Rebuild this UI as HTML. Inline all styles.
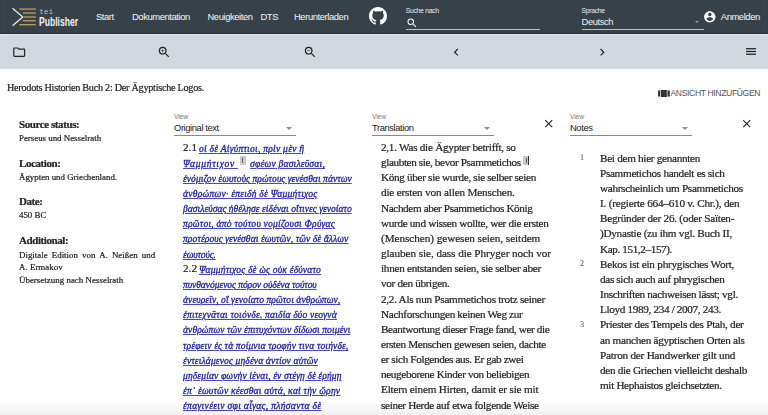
<!DOCTYPE html>
<html><head><meta charset="utf-8">
<style>
html,body{margin:0;padding:0;width:768px;height:415px;overflow:hidden;background:#fff;}
body{position:relative;font-family:"Liberation Sans",sans-serif;}
.abs{position:absolute;white-space:nowrap;}
#hdr{position:absolute;left:0;top:0;width:768px;height:34.4px;background:#36414a;z-index:2;box-shadow:inset 0 -1.5px 1px -0.5px #2a3238;}
#tb{position:absolute;left:0;top:34px;width:768px;height:34.5px;background:#d1d9de;}
.nav{position:absolute;top:11px;font-size:9.4px;line-height:12px;color:#eef0f1;letter-spacing:-0.4px;-webkit-text-stroke:0.05px #eef0f1;}
.lbl{position:absolute;font-size:6.8px;line-height:8px;letter-spacing:-0.3px;}
.serif{font-family:"Liberation Serif",serif;}
.col{position:absolute;font-family:"Liberation Serif",serif;font-size:10.8px;line-height:15.1px;color:#333;white-space:nowrap;}
.gr{color:#2222aa;font-style:italic;-webkit-text-stroke:0.3px #2222aa;text-decoration:underline;text-underline-offset:0.6px;text-decoration-thickness:1px;text-decoration-color:#4a4ab8;}
.side{position:absolute;left:18.5px;font-family:"Liberation Serif",serif;color:#333;white-space:nowrap;}
.side b{font-size:10.2px;}
.sel{position:absolute;top:112px;width:122px;height:23.4px;border-bottom:1px solid #8a8a8a;}
.sel .v{position:absolute;left:0;top:1.2px;font-size:6.8px;line-height:8px;color:#7a7a7a;letter-spacing:-0.15px;}
.sel .t{position:absolute;left:0;top:10px;font-size:9.4px;color:#222;letter-spacing:-0.4px;}
.sel .ar{position:absolute;right:3.8px;top:14.6px;width:0;height:0;border-left:3px solid transparent;border-right:3px solid transparent;border-top:3px solid #8f8f8f;}
.ln{position:absolute;white-space:nowrap;font-family:"Liberation Serif",serif;will-change:transform;}
.tx{color:#252525;-webkit-text-stroke:0.22px #252525;}
</style></head><body>
<div id="hdr">
  <svg class="abs" style="left:10px;top:6px" width="70" height="24" viewBox="0 0 70 24">
    <polyline points="2.5,2.2 12.8,11 2.5,19.8" fill="none" stroke="#e8e8e8" stroke-width="1.3"/>
    <g stroke="#d3a558" stroke-width="1.2">
      <line x1="9.3" y1="3.1" x2="25.8" y2="3.1"/>
      <line x1="13" y1="7" x2="25.8" y2="7"/>
      <line x1="14" y1="11" x2="25.8" y2="11"/>
      <line x1="13" y1="14.8" x2="25.8" y2="14.8"/>
      <line x1="9.3" y1="18.7" x2="25.8" y2="18.7"/>
    </g>
  </svg>
  <div class="abs" style="left:39.5px;top:8px;font-family:'Liberation Mono',monospace;font-size:7px;color:#c4c8ca;letter-spacing:0.4px;">tei</div>
  <div class="abs" style="left:39px;top:14.6px;font-size:12px;line-height:14px;font-weight:bold;color:#f2f2f2;transform:scaleX(0.713);transform-origin:0 0;">Publisher</div>
  <div class="nav" style="left:96px;">Start</div>
  <div class="nav" style="left:132px;">Dokumentation</div>
  <div class="nav" style="left:207.5px;">Neuigkeiten</div>
  <div class="nav" style="left:260.5px;">DTS</div>
  <div class="nav" style="left:294px;">Herunterladen</div>
  <svg class="abs" style="left:369px;top:6.5px" width="18" height="18" viewBox="0 0 16 16"><path fill="#fff" d="M8 0C3.58 0 0 3.58 0 8c0 3.54 2.29 6.53 5.47 7.59.4.07.55-.17.55-.38 0-.19-.01-.82-.01-1.49-2.01.37-2.53-.49-2.69-.94-.09-.23-.48-.94-.82-1.13-.28-.15-.68-.52-.01-.53.63-.01 1.08.58 1.23.82.72 1.21 1.87.87 2.33.66.07-.52.28-.87.51-1.07-1.78-.2-3.64-.89-3.64-3.95 0-.87.31-1.59.82-2.15-.08-.2-.36-1.02.08-2.12 0 0 .67-.21 2.2.82.64-.18 1.32-.27 2-.27.68 0 1.36.09 2 .27 1.53-1.04 2.2-.82 2.2-.82.44 1.1.16 1.92.08 2.12.51.56.82 1.27.82 2.15 0 3.07-1.87 3.75-3.65 3.95.29.25.54.73.54 1.48 0 1.07-.01 1.93-.01 2.2 0 .21.15.46.55.38A8.013 8.013 0 0016 8c0-4.42-3.58-8-8-8z"/></svg>
  <div class="lbl" style="left:405.8px;top:7px;color:#e8ebed;">Suche nach</div>
  <svg class="abs" style="left:406px;top:16.5px" width="12" height="12" viewBox="0 0 24 24"><path fill="#fff" d="M15.5 14h-.79l-.28-.27A6.471 6.471 0 0 0 16 9.5 6.5 6.5 0 1 0 9.5 16c1.61 0 3.09-.59 4.23-1.57l.27.28v.79l5 4.99L20.49 19l-4.99-5zm-6 0C7.01 14 5 11.99 5 9.5S7.01 5 9.5 5 14 7.01 14 9.5 11.99 14 9.5 14z"/></svg>
  <div class="abs" style="left:406px;top:29px;width:134px;height:1px;background:#b8bfc3;"></div>
  <div class="lbl" style="left:581.6px;top:6.8px;color:#e8ebed;">Sprache</div>
  <div class="abs" style="left:581.6px;top:16px;font-size:9.4px;color:#f0f0f0;letter-spacing:-0.4px;">Deutsch</div>
  <div class="abs" style="left:694.5px;top:20.8px;width:0;height:0;border-left:2.8px solid transparent;border-right:2.8px solid transparent;border-top:2.8px solid #9aa3a8;"></div>
  <div class="abs" style="left:581.6px;top:29px;width:122px;height:1px;background:#b8bfc3;"></div>
  <svg class="abs" style="left:703.3px;top:10.3px" width="13.6" height="13.6" viewBox="0 0 24 24"><path fill="#fff" d="M12 2C6.48 2 2 6.48 2 12s4.48 10 10 10 10-4.48 10-10S17.52 2 12 2zm0 3c1.66 0 3 1.34 3 3s-1.34 3-3 3-3-1.34-3-3 1.34-3 3-3zm0 14.2c-2.5 0-4.71-1.28-6-3.22.03-1.99 4-3.08 6-3.08 1.99 0 5.97 1.09 6 3.08-1.29 1.94-3.5 3.22-6 3.22z"/></svg>
  <div class="nav" style="left:720.8px;">Anmelden</div>
</div>
<div id="tb"><div style="position:absolute;left:0;top:0.4px;width:768px;height:2px;background:linear-gradient(#e2e7ea,#d1d9de);"></div>
  <svg class="abs" style="left:12px;top:10.5px" width="14.4" height="14.4" viewBox="0 0 24 24"><path fill="#222" d="M9.17 6l2 2H20v10H4V6h5.17M10 4H4c-1.1 0-1.99.9-1.99 2L2 18c0 1.1.9 2 2 2h16c1.1 0 2-.9 2-2V8c0-1.1-.9-2-2-2h-8l-2-2z"/></svg>
  <svg class="abs" style="left:157px;top:10.5px" width="14.4" height="14.4" viewBox="0 0 24 24"><path fill="#222" d="M15.5 14h-.79l-.28-.27A6.471 6.471 0 0 0 16 9.5 6.5 6.5 0 1 0 9.5 16c1.61 0 3.09-.59 4.23-1.57l.27.28v.79l5 4.99L20.49 19l-4.99-5zm-6 0C7.01 14 5 11.99 5 9.5S7.01 5 9.5 5 14 7.01 14 9.5 11.99 14 9.5 14z"/><path fill="#222" d="M12 10h-2v2H9v-2H7V9h2V7h1v2h2v1z"/></svg>
  <svg class="abs" style="left:303px;top:10.5px" width="14.4" height="14.4" viewBox="0 0 24 24"><path fill="#222" d="M15.5 14h-.79l-.28-.27A6.471 6.471 0 0 0 16 9.5 6.5 6.5 0 1 0 9.5 16c1.61 0 3.09-.59 4.23-1.57l.27.28v.79l5 4.99L20.49 19l-4.99-5zm-6 0C7.01 14 5 11.99 5 9.5S7.01 5 9.5 5 14 7.01 14 9.5 11.99 14 9.5 14z"/><path fill="#222" d="M7 9h5v1H7z"/></svg>
  <svg class="abs" style="left:449px;top:10.5px" width="14.4" height="14.4" viewBox="0 0 24 24"><path fill="#222" d="M15.41 7.41L14 6l-6 6 6 6 1.41-1.41L10.83 12z"/></svg>
  <svg class="abs" style="left:595px;top:10.5px" width="14.4" height="14.4" viewBox="0 0 24 24"><path fill="#222" d="M10 6L8.59 7.41 13.17 12l-4.58 4.59L10 18l6-6z"/></svg>
  <svg class="abs" style="left:745.6px;top:14.2px" width="10.4" height="7" viewBox="0 0 10.4 7"><rect x="0" y="0.1" width="10.3" height="1.25" fill="#222"/><rect x="0" y="2.85" width="10.3" height="1.25" fill="#222"/><rect x="0" y="5.6" width="10.3" height="1.25" fill="#222"/></svg>
</div>

<svg class="abs" style="left:658px;top:89.5px" width="12" height="7" viewBox="0 0 12 7"><rect x="0" y="0.5" width="2.3" height="6" fill="#333"/><rect x="3" y="0" width="5.8" height="7" fill="#333"/><rect x="9.5" y="0.5" width="2.3" height="6" fill="#333"/></svg>
<div class="abs" style="left:670.5px;top:87.5px;font-size:8.6px;color:#555;letter-spacing:-0.37px;">ANSICHT HINZUFÜGEN</div>


<div class="sel" style="left:174px;"><div class="v">View</div><div class="t">Original text</div><div class="ar"></div></div>
<div class="sel" style="left:372px;"><div class="v">View</div><div class="t">Translation</div><div class="ar"></div></div>
<div class="sel" style="left:570px;"><div class="v">View</div><div class="t">Notes</div><div class="ar"></div></div>
<svg class="abs" style="left:541.6px;top:117px" width="13.4" height="13.4" viewBox="0 0 24 24"><path fill="#222" d="M19 6.41L17.59 5 12 10.59 6.41 5 5 6.41 10.59 12 5 17.59 6.41 19 12 13.41 17.59 19 19 17.59 13.41 12z"/></svg>
<svg class="abs" style="left:739.6px;top:117px" width="13.4" height="13.4" viewBox="0 0 24 24"><path fill="#222" d="M19 6.41L17.59 5 12 10.59 6.41 5 5 6.41 10.59 12 5 17.59 6.41 19 12 13.41 17.59 19 19 17.59 13.41 12z"/></svg>
<div class="abs" style="left:240px;top:155.7px;width:5.8px;height:9px;background:#c8c8c8;"><div style="position:absolute;left:2.4px;top:2px;width:1px;height:5px;background:#666;"></div></div>
<div class="abs" style="left:523.4px;top:155.7px;width:5.5px;height:9.3px;background:#c8c8c8;border-right:0.8px solid #333;box-sizing:border-box;"><div style="position:absolute;left:2.2px;top:2px;width:1px;height:5px;background:#666;"></div></div>
<div id="g0" class="ln gr" style="left:198.6px;top:140.56px;font-size:9.6px;line-height:15px;letter-spacing:0.236px;">οἱ δὲ Αἰγύπτιοι, πρὶν μὲν ἢ</div>
<div id="g1" class="ln gr" style="left:183px;top:155.71px;font-size:9.6px;line-height:15px;letter-spacing:0.697px;">Ψαμμήτιχον&nbsp;</div>
<div id="g2" class="ln gr" style="left:183px;top:170.86px;font-size:9.6px;line-height:15px;letter-spacing:0.026px;">ἐνόμιζον ἑωυτοὺς πρώτους γενέσθαι πάντων</div>
<div id="g3" class="ln gr" style="left:183px;top:186.01px;font-size:9.6px;line-height:15px;letter-spacing:0.220px;">ἀνθρώπων· ἐπειδὴ δὲ Ψαμμήτιχος</div>
<div id="g4" class="ln gr" style="left:183px;top:201.16px;font-size:9.6px;line-height:15px;letter-spacing:0.015px;">βασιλεύσας ἠθέλησε εἰδέναι οἵτινες γενοίατο</div>
<div id="g5" class="ln gr" style="left:183px;top:216.31px;font-size:9.6px;line-height:15px;letter-spacing:0.212px;">πρῶτοι, ἀπὸ τούτου νομίζουσι Φρύγας</div>
<div id="g6" class="ln gr" style="left:183px;top:231.46px;font-size:9.6px;line-height:15px;letter-spacing:0.067px;">προτέρους γενέσθαι ἑωυτῶν, τῶν δὲ ἄλλων</div>
<div id="g7" class="ln gr" style="left:183px;top:246.61px;font-size:9.6px;line-height:15px;letter-spacing:-0.149px;">ἑωυτούς.</div>
<div id="g8" class="ln gr" style="left:198.6px;top:261.76px;font-size:9.6px;line-height:15px;letter-spacing:0.181px;">Ψαμμήτιχος δὲ ὡς οὐκ ἐδύνατο</div>
<div id="g9" class="ln gr" style="left:183px;top:276.91px;font-size:9.6px;line-height:15px;letter-spacing:-0.081px;">πυνθανόμενος πόρον οὐδένα τούτου</div>
<div id="g10" class="ln gr" style="left:183px;top:292.06px;font-size:9.6px;line-height:15px;letter-spacing:0.050px;">ἀνευρεῖν, οἳ γενοίατο πρῶτοι ἀνθρώπων,</div>
<div id="g11" class="ln gr" style="left:183px;top:307.21px;font-size:9.6px;line-height:15px;letter-spacing:0.167px;">ἐπιτεχνᾶται τοιόνδε. παιδία δύο νεογνὰ</div>
<div id="g12" class="ln gr" style="left:183px;top:322.36px;font-size:9.6px;line-height:15px;letter-spacing:0.051px;">ἀνθρώπων τῶν ἐπιτυχόντων δίδωσι ποιμένι</div>
<div id="g13" class="ln gr" style="left:183px;top:337.51px;font-size:9.6px;line-height:15px;letter-spacing:0.116px;">τρέφειν ἐς τὰ ποίμνια τροφήν τινα τοιήνδε,</div>
<div id="g14" class="ln gr" style="left:183px;top:352.66px;font-size:9.6px;line-height:15px;letter-spacing:0.115px;">ἐντειλάμενος μηδένα ἀντίον αὐτῶν</div>
<div id="g15" class="ln gr" style="left:183px;top:367.81px;font-size:9.6px;line-height:15px;letter-spacing:0.101px;">μηδεμίαν φωνὴν ἱέναι, ἐν στέγῃ δὲ ἐρήμῃ</div>
<div id="g16" class="ln gr" style="left:183px;top:382.96px;font-size:9.6px;line-height:15px;letter-spacing:0.187px;">ἐπ᾽ ἑωυτῶν κέεσθαι αὐτά, καὶ τὴν ὥρην</div>
<div id="g17" class="ln gr" style="left:183px;top:398.11px;font-size:9.6px;line-height:15px;letter-spacing:0.304px;">ἐπαγινέειν σφι αἶγας, πλήσαντα δὲ</div>
<div id="g1b" class="ln gr" style="left:249.8px;top:155.71px;font-size:9.6px;line-height:15px;letter-spacing:0.198px;">σφέων βασιλεῦσαι,</div>
<div id="gn0" class="ln tx" style="left:183px;top:140.02px;font-size:11.2px;line-height:15px;letter-spacing:0.000px;">2.1</div>
<div id="gn8" class="ln tx" style="left:183px;top:261.22px;font-size:11.2px;line-height:15px;letter-spacing:0.000px;">2.2</div>
<div id="t0" class="ln tx" style="left:381px;top:140.02px;font-size:11.2px;line-height:15px;letter-spacing:-0.266px;">2,1. Was die Ägypter betrifft, so</div>
<div id="t1" class="ln tx" style="left:381px;top:155.17px;font-size:11.2px;line-height:15px;letter-spacing:-0.392px;">glaubten sie, bevor Psammetichos</div>
<div id="t2" class="ln tx" style="left:381px;top:170.32px;font-size:11.2px;line-height:15px;letter-spacing:-0.322px;">Köng über sie wurde, sie selber seien</div>
<div id="t3" class="ln tx" style="left:381px;top:185.47px;font-size:11.2px;line-height:15px;letter-spacing:-0.172px;">die ersten von allen Menschen.</div>
<div id="t4" class="ln tx" style="left:381px;top:200.62px;font-size:11.2px;line-height:15px;letter-spacing:-0.374px;">Nachdem aber Psammetichos König</div>
<div id="t5" class="ln tx" style="left:381px;top:215.77px;font-size:11.2px;line-height:15px;letter-spacing:-0.320px;">wurde und wissen wollte, wer die ersten</div>
<div id="t6" class="ln tx" style="left:381px;top:230.92px;font-size:11.2px;line-height:15px;letter-spacing:-0.050px;">(Menschen) gewesen seien, seitdem</div>
<div id="t7" class="ln tx" style="left:381px;top:246.07px;font-size:11.2px;line-height:15px;letter-spacing:-0.064px;">glauben sie, dass die Phryger noch vor</div>
<div id="t8" class="ln tx" style="left:381px;top:261.22px;font-size:11.2px;line-height:15px;letter-spacing:-0.279px;">ihnen entstanden seien, sie selber aber</div>
<div id="t9" class="ln tx" style="left:381px;top:276.37px;font-size:11.2px;line-height:15px;letter-spacing:-0.315px;">vor den übrigen.</div>
<div id="t10" class="ln tx" style="left:381px;top:291.52px;font-size:11.2px;line-height:15px;letter-spacing:-0.271px;">2,2. Als nun Psammetichos trotz seiner</div>
<div id="t11" class="ln tx" style="left:381px;top:306.67px;font-size:11.2px;line-height:15px;letter-spacing:-0.334px;">Nachforschungen keinen Weg zur</div>
<div id="t12" class="ln tx" style="left:381px;top:321.82px;font-size:11.2px;line-height:15px;letter-spacing:-0.366px;">Beantwortung dieser Frage fand, wer die</div>
<div id="t13" class="ln tx" style="left:381px;top:336.97px;font-size:11.2px;line-height:15px;letter-spacing:-0.335px;">ersten Menschen gewesen seien, dachte</div>
<div id="t14" class="ln tx" style="left:381px;top:352.12px;font-size:11.2px;line-height:15px;letter-spacing:-0.372px;">er sich Folgendes aus. Er gab zwei</div>
<div id="t15" class="ln tx" style="left:381px;top:367.27px;font-size:11.2px;line-height:15px;letter-spacing:-0.358px;">neugeborene Kinder von beliebigen</div>
<div id="t16" class="ln tx" style="left:381px;top:382.42px;font-size:11.2px;line-height:15px;letter-spacing:-0.190px;">Eltern einem Hirten, damit er sie mit</div>
<div id="t17" class="ln tx" style="left:381px;top:397.57px;font-size:11.2px;line-height:15px;letter-spacing:-0.328px;">seiner Herde auf etwa folgende Weise</div>
<div id="n0" class="ln tx" style="left:600.3px;top:150.72px;font-size:11.2px;line-height:15px;letter-spacing:-0.294px;">Bei dem hier genannten</div>
<div id="n1" class="ln tx" style="left:600.3px;top:165.87px;font-size:11.2px;line-height:15px;letter-spacing:-0.311px;">Psammetichos handelt es sich</div>
<div id="n2" class="ln tx" style="left:600.3px;top:181.02px;font-size:11.2px;line-height:15px;letter-spacing:-0.315px;">wahrscheinlich um Psammetichos</div>
<div id="n3" class="ln tx" style="left:600.3px;top:196.17px;font-size:11.2px;line-height:15px;letter-spacing:-0.219px;">I. (regierte 664–610 v. Chr.), den</div>
<div id="n4" class="ln tx" style="left:600.3px;top:211.32px;font-size:11.2px;line-height:15px;letter-spacing:-0.251px;">Begründer der 26. (oder Saïten-</div>
<div id="n5" class="ln tx" style="left:600.3px;top:226.47px;font-size:11.2px;line-height:15px;letter-spacing:-0.265px;">)Dynastie (zu ihm vgl. Buch II,</div>
<div id="n6" class="ln tx" style="left:600.3px;top:241.62px;font-size:11.2px;line-height:15px;letter-spacing:-0.393px;">Kap. 151,2–157).</div>
<div id="n7" class="ln tx" style="left:600.3px;top:256.77px;font-size:11.2px;line-height:15px;letter-spacing:-0.237px;">Bekos ist ein phrygisches Wort,</div>
<div id="n8" class="ln tx" style="left:600.3px;top:271.92px;font-size:11.2px;line-height:15px;letter-spacing:-0.338px;">das sich auch auf phrygischen</div>
<div id="n9" class="ln tx" style="left:600.3px;top:287.07px;font-size:11.2px;line-height:15px;letter-spacing:-0.331px;">Inschriften nachweisen lässt; vgl.</div>
<div id="n10" class="ln tx" style="left:600.3px;top:302.22px;font-size:11.2px;line-height:15px;letter-spacing:-0.340px;">Lloyd 1989, 234 / 2007, 243.</div>
<div id="n11" class="ln tx" style="left:600.3px;top:317.37px;font-size:11.2px;line-height:15px;letter-spacing:-0.262px;">Priester des Tempels des Ptah, der</div>
<div id="n12" class="ln tx" style="left:600.3px;top:332.52px;font-size:11.2px;line-height:15px;letter-spacing:-0.277px;">an manchen ägyptischen Orten als</div>
<div id="n13" class="ln tx" style="left:600.3px;top:347.67px;font-size:11.2px;line-height:15px;letter-spacing:-0.216px;">Patron der Handwerker gilt und</div>
<div id="n14" class="ln tx" style="left:600.3px;top:362.82px;font-size:11.2px;line-height:15px;letter-spacing:-0.309px;">den die Griechen vielleicht deshalb</div>
<div id="n15" class="ln tx" style="left:600.3px;top:377.97px;font-size:11.2px;line-height:15px;letter-spacing:-0.335px;">mit Hephaistos gleichsetzten.</div>
<div id="sh0" class="ln tx" style="left:18.5px;top:116.79px;font-size:11px;line-height:15px;letter-spacing:-0.419px;font-weight:bold;">Source status:</div>
<div id="sv0" class="ln tx" style="left:18.5px;top:131.00px;font-size:8.9px;line-height:15px;letter-spacing:-0.011px;">Perseus und Nesselrath</div>
<div id="sh1" class="ln tx" style="left:18.5px;top:155.99px;font-size:11px;line-height:15px;letter-spacing:-0.419px;font-weight:bold;">Location:</div>
<div id="sv1" class="ln tx" style="left:18.5px;top:170.00px;font-size:8.9px;line-height:15px;letter-spacing:-0.011px;">Ägypten und Griechenland.</div>
<div id="sh2" class="ln tx" style="left:18.5px;top:193.69px;font-size:11px;line-height:15px;letter-spacing:-0.419px;font-weight:bold;">Date:</div>
<div id="sv2" class="ln tx" style="left:18.5px;top:207.90px;font-size:8.9px;line-height:15px;letter-spacing:-0.011px;">450 BC</div>
<div id="sh3" class="ln tx" style="left:18.5px;top:232.99px;font-size:11px;line-height:15px;letter-spacing:-0.419px;font-weight:bold;">Additional:</div>
<div id="sv3" class="ln tx" style="left:18.5px;top:247.50px;font-size:8.9px;line-height:15px;letter-spacing:0.000px;word-spacing:1.979px;">Digitale Edition von A. Neißen und</div>
<div id="sv4" class="ln tx" style="left:18.5px;top:259.70px;font-size:8.9px;line-height:15px;letter-spacing:0.029px;">A. Ermakov</div>
<div id="sv5" class="ln tx" style="left:18.5px;top:272.70px;font-size:8.9px;line-height:15px;letter-spacing:0.029px;">Übersetzung nach Nesselrath</div>
<div id="title" class="ln tx" style="left:7.3px;top:80.06px;font-size:10.2px;line-height:15px;letter-spacing:-0.264px;">Herodots Historien Buch 2: Der Ägyptische Logos.</div>
<div id="nn1" class="ln tx" style="left:579.5px;top:150.23px;font-size:8.2px;line-height:15px;letter-spacing:0.000px;color:#4a4a4a;-webkit-text-stroke:0;">1</div>
<div id="nn2" class="ln tx" style="left:579.5px;top:256.28px;font-size:8.2px;line-height:15px;letter-spacing:0.000px;color:#4a4a4a;-webkit-text-stroke:0;">2</div>
<div id="nn3" class="ln tx" style="left:579.5px;top:316.88px;font-size:8.2px;line-height:15px;letter-spacing:0.000px;color:#4a4a4a;-webkit-text-stroke:0;">3</div>
<div style="position:absolute;left:0;top:401px;width:768px;height:14px;background:linear-gradient(rgba(0,0,0,0),rgba(0,0,0,0.055));z-index:5;"></div>
</body></html>
